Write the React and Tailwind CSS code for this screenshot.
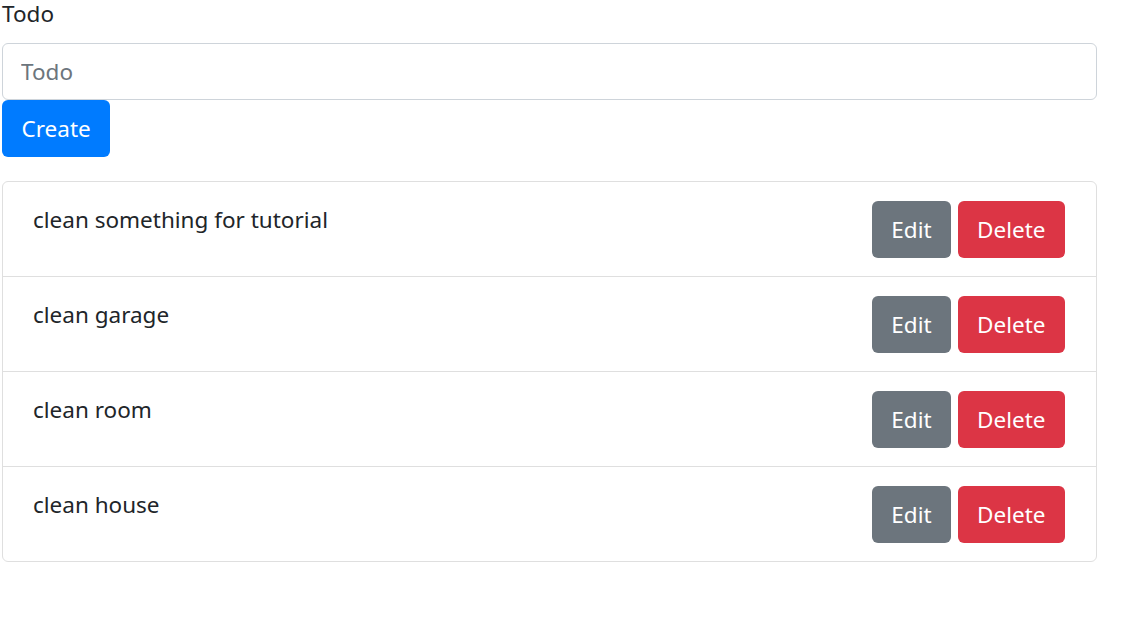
import React, { useState } from 'react'

const TODOS = ['clean something for tutorial', 'clean garage', 'clean room', 'clean house']

function TodoItem({ text, last }) {
  return (
    <li
      className={`flex items-start justify-between pl-[30px] pr-[31px] pt-[19px] pb-[18px] ${
        last ? '' : 'border-b border-[#dfdfdf]'
      }`}
    >
      <span className="mt-[1px] leading-[36px] text-[#212529]">{text}</span>
      <div className="flex gap-[7px]">
        <button className="h-[57px] rounded-[6px] bg-[#6c757d] px-[19px] leading-[36px] text-white">
          Edit
        </button>
        <button className="h-[57px] rounded-[6px] bg-[#dc3545] px-[19.5px] leading-[36px] text-white">
          Delete
        </button>
      </div>
    </li>
  )
}

export default function App() {
  const [value, setValue] = useState('')

  return (
    <div
      className="min-h-[644px] bg-white text-[22.5px] text-[#212529]"
      style={{ fontFamily: '"Noto Sans", "Open Sans", sans-serif' }}
    >
      <div className="ml-[2px] w-[1095px]">
        <label className="block leading-[28px]">Todo</label>
        <input
          value={value}
          onChange={(e) => setValue(e.target.value)}
          placeholder="Todo"
          className="mt-[15px] block h-[57px] w-full rounded-[6px] border border-[#ced4da] px-[18px] text-[#495057] placeholder:text-[#6c757d] focus:outline-none"
        />
        <button className="block h-[57px] rounded-[6px] bg-[#007bff] px-[19.5px] leading-[36px] text-white">
          Create
        </button>

        <ul className="mt-[24px] rounded-[6px] border border-[#dfdfdf]">
          {TODOS.map((t, i) => (
            <TodoItem key={t} text={t} last={i === TODOS.length - 1} />
          ))}
        </ul>
      </div>
    </div>
  )
}
